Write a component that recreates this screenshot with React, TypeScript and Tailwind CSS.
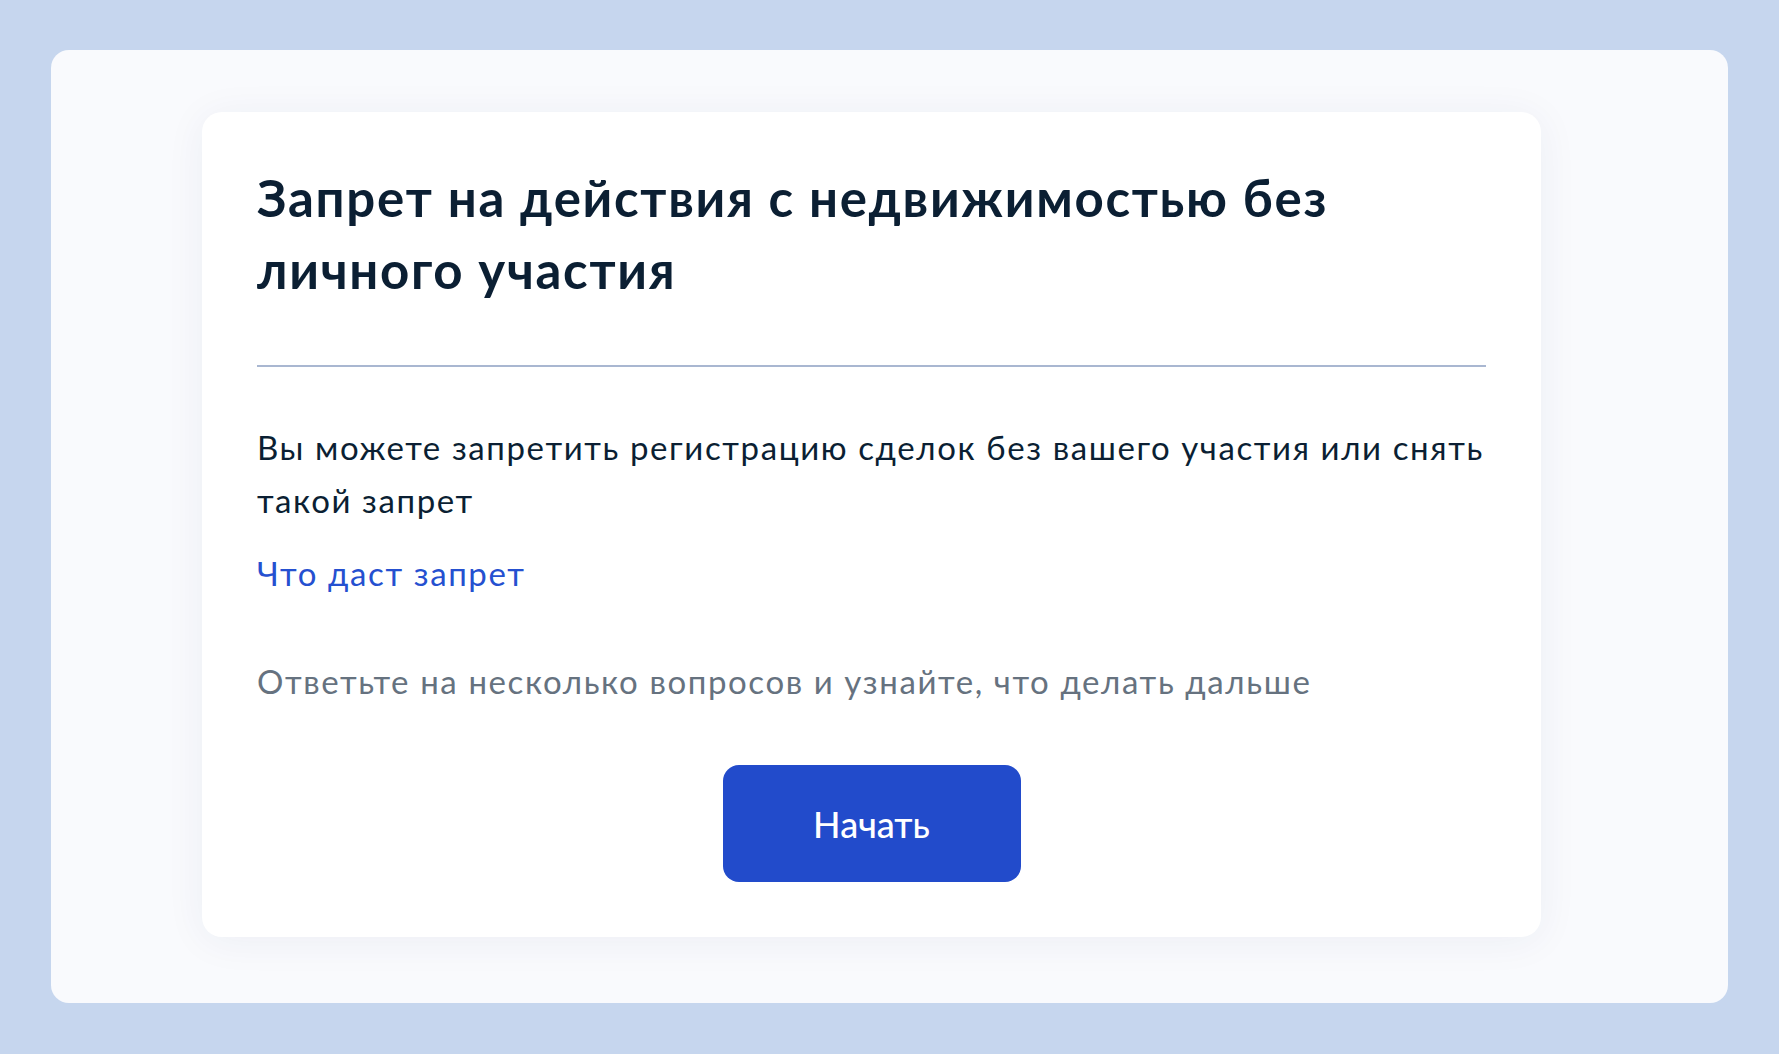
export default function App() {
  return (
    <div
      className="min-h-screen w-full bg-[#c6d6ee] p-[51px] pt-[50px]"
      style={{ fontFamily: "Lato, 'Noto Sans', sans-serif" }}
    >
      <div className="flex h-[953px] w-full flex-col rounded-[18px] bg-[#f9fafd] pb-[66px] pl-[151px] pr-[187px] pt-[62px]">
        <div className="flex flex-col rounded-[20px] bg-white px-[55px] pb-[55px] pt-[50px] shadow-[0_4px_40px_rgba(30,50,100,0.06)]">
          <h1 className="text-[51px] font-bold leading-[72px] tracking-[1.7px] text-[#0b1f33]">
            Запрет на действия с недвижимостью без
            <br />
            личного участия
          </h1>
          <div className="mt-[59px] h-[2px] w-full bg-[#a9b7d1]" />
          <p className="mt-[54px] text-[33px] leading-[53px] tracking-[1.6px] text-[#0b1f33]">
            Вы можете запретить регистрацию сделок без вашего участия или снять
            <br />
            такой запрет
          </p>
          <a className="mt-[20px] self-start text-[33px] leading-[53px] tracking-[1.6px] text-[#2550d0]" href="#">
            Что даст запрет
          </a>
          <p className="mt-[55px] text-[33px] leading-[53px] tracking-[1.6px] text-[#66727f]">
            Ответьте на несколько вопросов и узнайте, что делать дальше
          </p>
          <div className="mt-[57px] flex justify-center">
            <button className="h-[117px] w-[298px] rounded-[16px] bg-[#224bcb] text-[36px] font-medium text-white">
              Начать
            </button>
          </div>
        </div>
      </div>
    </div>
  );
}
